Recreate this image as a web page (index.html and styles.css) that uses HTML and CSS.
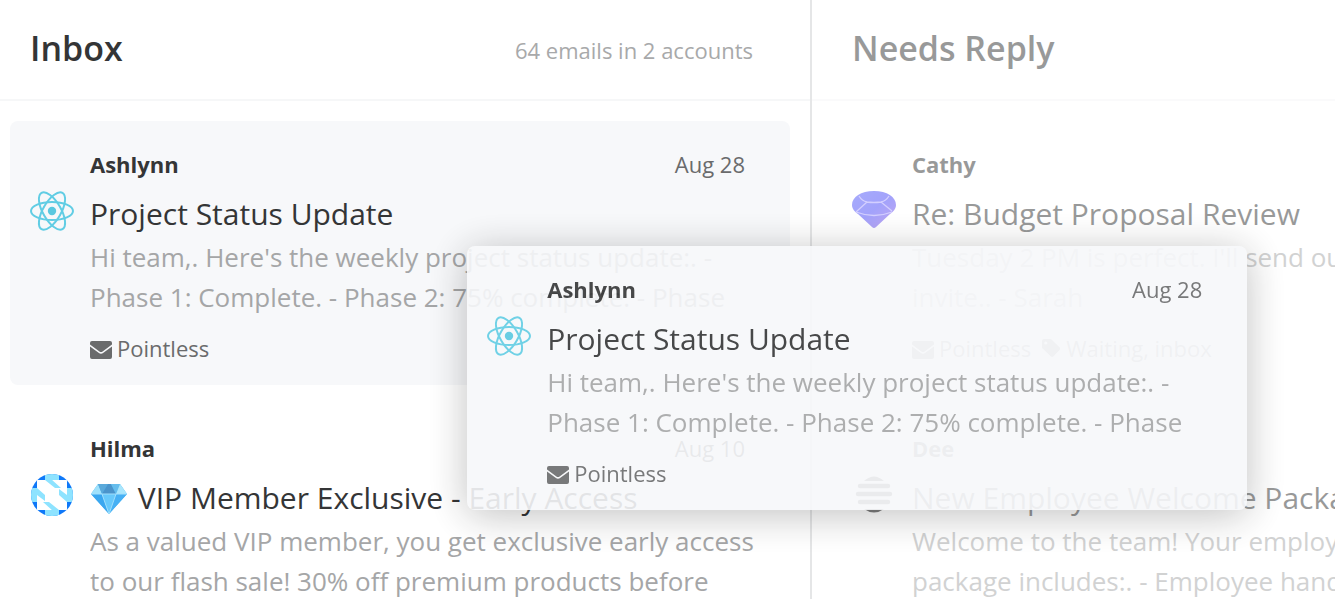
FILE: index.html
```html
<!DOCTYPE html>
<html lang="en">
<head>
<meta charset="utf-8">
<title>Inbox</title>
<link rel="stylesheet" href="styles.css">
</head>
<body>
<svg class="sprite" aria-hidden="true">
  <symbol id="atom" viewBox="0 0 44 44">
    <g fill="none" stroke="#61cde4" stroke-width="2">
      <ellipse cx="22" cy="22" rx="21" ry="9"/>
      <ellipse cx="22" cy="22" rx="21" ry="9" transform="rotate(60 22 22)"/>
      <ellipse cx="22" cy="22" rx="21" ry="9" transform="rotate(120 22 22)"/>
    </g>
    <circle cx="22" cy="22" r="4.2" fill="#5ac8e0"/>
  </symbol>
  <symbol id="envelope" viewBox="0 0 22 18">
    <path d="M2 0h18a2 2 0 0 1 2 2v1.600L12.600 10.400a2.600 2.600 0 0 1-3.200 0L0 3.600V2a2 2 0 0 1 2-2z" fill="currentColor"/>
    <path d="M0 5.600l8.600 6.200a4 4 0 0 0 4.800 0L22 5.600V16a2 2 0 0 1-2 2H2a2 2 0 0 1-2-2z" fill="currentColor"/>
  </symbol>
  <symbol id="tag" viewBox="0 0 20 18">
    <path fill-rule="evenodd" d="M1 2a2 2 0 0 1 2-2h6a2 2 0 0 1 1.500.600l8 7.600a2 2 0 0 1 0 2.800l-6 6.300a2 2 0 0 1-2.800 0L1.600 9.600A2 2 0 0 1 1 8zM4.800 2.400a1.600 1.600 0 1 0 0 3.200 1.600 1.600 0 0 0 0-3.200z" fill="currentColor"/>
  </symbol>
</svg>

<main class="board">
  <section class="column">
    <header class="column-header">
      <h1 class="column-title">Inbox</h1>
      <span class="column-count">64 emails in 2 accounts</span>
    </header>
    <div class="list">
      <article class="mail mail-selected">
        <svg class="avatar" aria-hidden="true"><use href="#atom"/></svg>
        <div class="mail-body">
          <div class="mail-top"><span class="sender">Ashlynn</span><time class="date">Aug 28</time></div>
          <h2 class="subject">Project Status Update</h2>
          <p class="preview">Hi team,. Here's the weekly project status update:. - Phase 1: Complete. - Phase 2: 75% complete. - Phase</p>
          <div class="labels"><svg class="icon-mail" aria-hidden="true"><use href="#envelope"/></svg><span>Pointless</span></div>
        </div>
      </article>
      <article class="mail">
        <svg class="avatar" viewBox="0 0 44 44" aria-hidden="true">
          <defs><clipPath id="round"><circle cx="22" cy="22" r="21"/></clipPath></defs>
          <g clip-path="url(#round)">
            <rect width="44" height="44" fill="#0f78f8"/>
            <path d="M15 0h14v44H15zM0 15h44v14H0z" fill="#8ee3ff"/>
            <rect x="7" y="7" width="30" height="30" fill="#fff"/>
            <path d="M7 15l8 7v6l-8-6zM13 29h6l10 8v1h-6zM37 29l-8-7v-6l8 6zM31 15h-6L15 7V6h6z" fill="#8ee3ff"/>
          </g>
        </svg>
        <div class="mail-body">
          <div class="mail-top"><span class="sender">Hilma</span><time class="date">Aug 10</time></div>
          <h2 class="subject"><svg class="gem" viewBox="0 0 38 32" role="img" aria-label="gem">
            <path d="M8 1h22l7 10-18 20L1 11z" fill="#45b4f3"/>
            <path d="M8 1l4 10H1z" fill="#9fe1fb"/><path d="M8 1h10l-6 10z" fill="#5aa9da"/>
            <path d="M18 1h3l5 10H12z" fill="#4a94cb"/><path d="M21 1h9l-4 10z" fill="#66bdec"/>
            <path d="M30 1l7 10H26z" fill="#a9e6fc"/><path d="M1 11h11l7 20z" fill="#3aa7f0"/>
            <path d="M12 11h14l-7 20z" fill="#67c9fb"/><path d="M26 11h11L19 31z" fill="#46b0f4"/>
            <path d="M1 11h36M12 11l7 20 7-20" fill="none" stroke="#a0dffc"/>
          </svg> VIP Member Exclusive - Early Access</h2>
          <p class="preview">As a valued VIP member, you get exclusive early access to our flash sale! 30% off premium products before</p>
          <div class="labels"><svg class="icon-mail" aria-hidden="true"><use href="#envelope"/></svg><span>Pointless</span></div>
        </div>
      </article>
    </div>
  </section>

  <section class="column column-next">
    <header class="column-header">
      <h1 class="column-title">Needs Reply</h1>
    </header>
    <div class="list">
      <article class="mail">
        <svg class="avatar" viewBox="0 0 44 44" aria-hidden="true">
          <defs><linearGradient id="violet" x1="0" y1="0" x2="1" y2="1"><stop offset="0" stop-color="#4f58fa"/><stop offset=".5" stop-color="#4848f8"/><stop offset="1" stop-color="#8450e6"/></linearGradient></defs>
          <path d="M0 16C0 8 9 2 22 2s22 6 22 14c0 4-3 7-6 9L24 38q-2 2-4 0L6 25c-3-2-6-5-6-9z" fill="url(#violet)"/>
          <path d="M7 7q3 5 8 6 7 1 14 0 5-1 8-6M15 13L4 23M29 13l11 9M4 23q18 7 36 0" fill="none" stroke="#a9a0ff" stroke-width="1.3"/>
        </svg>
        <div class="mail-body">
          <div class="mail-top"><span class="sender">Cathy</span><time class="date">Aug 27</time></div>
          <h2 class="subject">Re: Budget Proposal Review</h2>
          <p class="preview">Tuesday 2 PM is perfect. I'll send out the calendar invite.. - Sarah</p>
          <div class="labels"><svg class="icon-mail" aria-hidden="true"><use href="#envelope"/></svg><span>Pointless</span><svg class="icon-tag" aria-hidden="true"><use href="#tag"/></svg><span>Waiting, inbox</span></div>
        </div>
      </article>
      <article class="mail">
        <svg class="avatar" viewBox="0 0 44 44" aria-hidden="true">
          <path d="M12 8q10-9 20 0zM12 36q10 7 20 0z" fill="#000"/>
          <path d="M8 13h28M6 21h32M8 29h28" stroke="#000" stroke-width="4.500" stroke-linecap="round"/>
        </svg>
        <div class="mail-body">
          <div class="mail-top"><span class="sender">Dee</span><time class="date">Aug 26</time></div>
          <h2 class="subject">New Employee Welcome Package</h2>
          <p class="preview">Welcome to the team! Your employee onboarding package includes:. - Employee handbook</p>
          <div class="labels"><svg class="icon-mail" aria-hidden="true"><use href="#envelope"/></svg><span>Pointless</span></div>
        </div>
      </article>
    </div>
  </section>
</main>

<article class="mail mail-selected mail-dragged">
  <svg class="avatar" aria-hidden="true"><use href="#atom"/></svg>
  <div class="mail-body">
    <div class="mail-top"><span class="sender">Ashlynn</span><time class="date">Aug 28</time></div>
    <h2 class="subject">Project Status Update</h2>
    <p class="preview">Hi team,. Here's the weekly project status update:. - Phase 1: Complete. - Phase 2: 75% complete. - Phase</p>
    <div class="labels"><svg class="icon-mail" aria-hidden="true"><use href="#envelope"/></svg><span>Pointless</span></div>
  </div>
</article>
</body>
</html>
```

FILE: styles.css
```css
* {
  box-sizing: border-box;
}

body {
  margin: 0;
  height: 100vh;
  overflow: hidden;
  background: #fff;
  color: #343536;
  font-family: "Open Sans", "Noto Sans", sans-serif;
}

h1, h2, p {
  margin: 0;
}

.sprite {
  position: absolute;
  width: 0;
  height: 0;
}

.board {
  display: flex;
  height: 100%;
  overflow: hidden;
}

.column {
  flex: 0 0 calc(60% + 11px);
  overflow: hidden;
  border-right: 2px solid #e5e6e7;
}

.column-next {
  opacity: 0.5;
}

.column-header {
  display: flex;
  align-items: center;
  justify-content: space-between;
  height: 101px;
  padding: 0 57px 0 30px;
  border-bottom: 2px solid #f6f7f8;
}

.column-title {
  padding-bottom: 4px;
  font-size: 34px;
  font-weight: 600;
  line-height: 46px;
}

.column-count {
  color: #a8a9aa;
  font-size: 22px;
  line-height: 30px;
}

.column-next .column-header {
  padding-left: 40px;
}

.list {
  display: flex;
  flex-direction: column;
  gap: 20px;
  padding: 20px 20px 20px 10px;
}

.column-next .list {
  padding-left: 20px;
  padding-right: 10px;
}

.mail {
  display: flex;
  gap: 16px;
  padding: 23px 20px 18px;
  border-radius: 8px;
}

.mail-selected {
  background: #f7f8fa;
}

.mail-dragged {
  position: fixed;
  top: 246px;
  left: 35%;
  width: calc(60% - 21px);
  opacity: 0.9;
  box-shadow: 0 5px 40px rgba(0, 0, 0, 0.28);
}

.avatar {
  flex: none;
  width: 44px;
  height: 44px;
  margin-top: 45px;
}

.mail-body {
  flex: 1;
  min-width: 0;
}

.mail-top {
  display: flex;
  justify-content: space-between;
  padding-right: 25px;
  font-size: 22px;
  line-height: 40px;
}

.sender {
  font-weight: 700;
}

.date, .labels {
  color: #6a6b6c;
}

.subject {
  overflow: hidden;
  padding-top: 7px;
  font-size: 30px;
  font-weight: 400;
  line-height: 46px;
  white-space: nowrap;
}

.gem {
  width: 38px;
  height: 32px;
  margin-right: 2px;
  vertical-align: -6px;
}

.preview {
  height: 80px;
  overflow: hidden;
  color: #a5a6a7;
  font-size: 26px;
  line-height: 40px;
}

.labels {
  display: flex;
  align-items: center;
  gap: 5px;
  padding-top: 12px;
  font-size: 22px;
  line-height: 38px;
}

.icon-mail {
  width: 22px;
  height: 18px;
  margin-top: 3px;
}

.icon-tag {
  width: 20px;
  height: 18px;
  margin-left: 5px;
}
```
